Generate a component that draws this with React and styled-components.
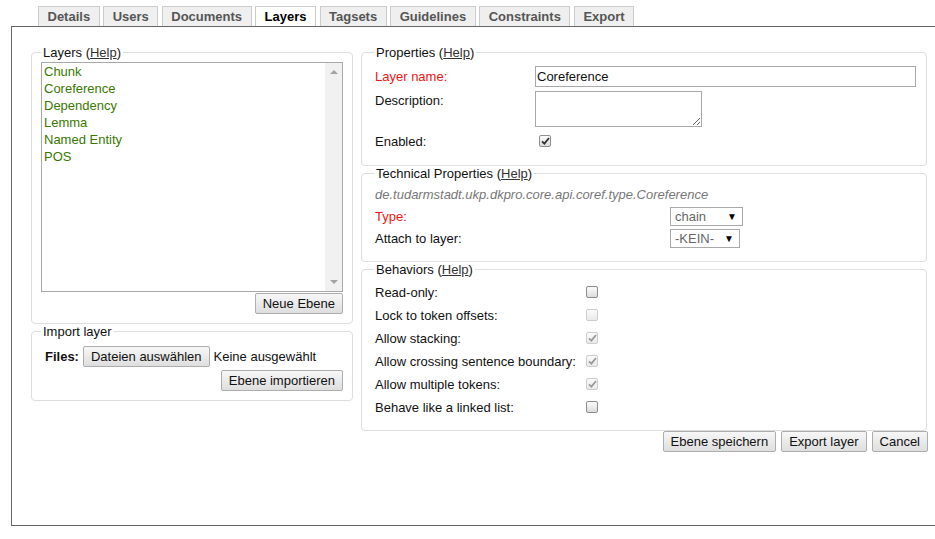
import React from "react";
import styled, { createGlobalStyle, css } from "styled-components";

const Global = createGlobalStyle`
  body {
    margin: 0;
    background: #fff;
    font: 13px/15px "Liberation Sans", Arial, sans-serif;
    color: #111;
  }
`;

const Page = styled.div`
  padding: 6px 0 0 11px;
  width: 935px;
  height: 539px;
  box-sizing: border-box;
  overflow: hidden;
`;

const TabBar = styled.div`
  display: flex;
  gap: 3.5px;
  padding-left: 27px;
`;

const Tab = styled.div`
  height: 19px;
  padding: 0 8.5px;
  display: flex;
  align-items: center;
  border: 1px solid #ccc;
  border-bottom: none;
  background: #efefef;
  font-weight: bold;
  color: #555;
  ${(p) =>
    p.$active &&
    css`
      background: #fff;
      color: #000;
    `}
`;

const Main = styled.div`
  box-sizing: border-box;
  width: 960px;
  height: 500px;
  border: 1px solid #666;
  padding: 18px 0 0 19px;
  display: flex;
  gap: 8px;
  align-items: flex-start;
`;

const Column = styled.div`
  width: ${(p) => p.$width}px;
  display: flex;
  flex-direction: column;
  gap: ${(p) => p.$gap || 0}px;
`;

const Fieldset = styled.fieldset`
  margin: 0;
  border: 1px solid #ddd;
  border-radius: 4px;
  padding: ${(p) => p.$pad || "2px 9px 9px"};
  min-width: 0;
`;

const Legend = styled.legend`
  padding: 0 2px;
  line-height: 15px;
  color: #111;
`;

const HelpLink = styled.a`
  color: #333;
  text-decoration: underline;
  cursor: pointer;
`;

const ListBox = styled.div`
  height: 230px;
  box-sizing: border-box;
  border: 1px solid #a9a9a9;
  display: flex;
`;

const ListItems = styled.div`
  flex: 1;
  padding: 0 2px;
`;

const ListItem = styled.div`
  line-height: 17px;
  color: #3b7800;
`;

const ScrollTrack = styled.div`
  width: 17px;
  background: #f1f1f1;
  display: flex;
  flex-direction: column;
  justify-content: space-between;
  align-items: center;
  padding: 7px 0;
  box-sizing: border-box;
`;

const Arrow = styled.div`
  width: 0;
  height: 0;
  border-left: 4px solid transparent;
  border-right: 4px solid transparent;
  ${(p) =>
    p.$down
      ? css`border-top: 4px solid #a3a3a3;`
      : css`border-bottom: 4px solid #a3a3a3;`}
`;

const RightAlign = styled.div`
  display: flex;
  justify-content: flex-end;
  gap: ${(p) => p.$gap || 0}px;
  margin-top: ${(p) => p.$top || 0}px;
  margin-right: ${(p) => p.$right || 0}px;
`;

const Button = styled.button`
  font: 13px/15px "Liberation Sans", Arial, sans-serif;
  color: #111;
  height: 21px;
  padding: 0 7px;
  border: 1px solid #adadad;
  border-radius: 2px;
  background: linear-gradient(#f7f7f7, #dedede);
`;

const FilesRow = styled.div`
  display: flex;
  align-items: center;
  gap: 4px;
  margin-top: 1px;
`;

const Bold = styled.span`
  font-weight: bold;
  margin-left: 4px;
`;

const FormGrid = styled.div`
  display: grid;
  grid-template-columns: ${(p) => p.$label}px 1fr;
  grid-auto-rows: ${(p) => p.$rows || "auto"};
  row-gap: ${(p) => p.$gap}px;
  align-items: center;
`;

const Label = styled.div`
  color: ${(p) => (p.$required ? "#f01414" : "#111")};
  align-self: ${(p) => (p.$top ? "start" : "center")};
  padding-top: ${(p) => (p.$top ? 2 : 0)}px;
  padding-left: 1px;
  min-height: ${(p) => p.$height || 0}px;
  display: flex;
  align-items: center;
`;

const TextInput = styled.input`
  font: 13px "Liberation Sans", Arial, sans-serif;
  color: #111;
  box-sizing: border-box;
  width: 381px;
  height: 21px;
  border: 1px solid #a9a9a9;
  padding: 0 1px;
  outline: none;
`;

const TextArea = styled.textarea`
  box-sizing: border-box;
  width: 167px;
  height: 36px;
  border: 1px solid #a9a9a9;
  margin: 0;
  outline: none;
`;

const Mono = styled.div`
  grid-column: 1 / 3;
  font-style: italic;
  color: #777;
  padding-left: 1px;
`;

const Select = styled.div`
  width: ${(p) => p.$width}px;
  height: 19px;
  box-sizing: border-box;
  border: 1px solid #a9a9a9;
  display: flex;
  align-items: center;
  justify-content: space-between;
  padding: 0 5px 0 4px;
  color: #666;
`;

const SelectArrow = styled.span`
  color: #000;
  font-size: 10px;
`;

const Box = styled.span`
  width: 12px;
  height: 12px;
  box-sizing: border-box;
  border: 1px solid ${(p) => (p.$disabled ? "#cdcdcd" : "#8e8e8e")};
  border-radius: 2px;
  background: ${(p) =>
    p.$disabled ? "linear-gradient(#fafafa, #eaeaea)" : "linear-gradient(#fcfcfc, #dcdcdc)"};
  display: flex;
  align-items: center;
  justify-content: center;
  margin-left: ${(p) => p.$offset || 0}px;
`;

const Checkbox = ({ checked, disabled, offset }) => (
  <Box $disabled={disabled} $offset={offset}>
    {checked && (
      <svg width="9" height="8" viewBox="0 0 9 8">
        <path
          d="M1 4.3 L3.4 6.6 L8 1"
          fill="none"
          stroke={disabled ? "#9a9a9a" : "#333"}
          strokeWidth="1.8"
        />
      </svg>
    )}
  </Box>
);

const tabs = ["Details", "Users", "Documents", "Layers", "Tagsets", "Guidelines", "Constraints", "Export"];
const layers = ["Chunk", "Coreference", "Dependency", "Lemma", "Named Entity", "POS"];
const behaviors = [
  ["Read-only:", false, false],
  ["Lock to token offsets:", false, true],
  ["Allow stacking:", true, true],
  ["Allow crossing sentence boundary:", true, true],
  ["Allow multiple tokens:", true, true],
  ["Behave like a linked list:", false, false],
];

const Title = ({ children }) => (
  <Legend>
    {children} (<HelpLink>Help</HelpLink>)
  </Legend>
);

export default function App() {
  return (
    <Page>
      <Global />
      <TabBar>
        {tabs.map((t) => (
          <Tab key={t} $active={t === "Layers"}>
            {t}
          </Tab>
        ))}
      </TabBar>
      <Main>
        <Column $width={322}>
          <Fieldset>
            <Title>Layers</Title>
            <ListBox>
              <ListItems>
                {layers.map((l) => (
                  <ListItem key={l}>{l}</ListItem>
                ))}
              </ListItems>
              <ScrollTrack>
                <Arrow />
                <Arrow $down />
              </ScrollTrack>
            </ListBox>
            <RightAlign $top={1}>
              <Button>Neue Ebene</Button>
            </RightAlign>
          </Fieldset>
          <Fieldset $pad="6px 9px 9px">
            <Legend>Import layer</Legend>
            <FilesRow>
              <Bold>Files:</Bold>
              <Button>Dateien auswählen</Button>
              <span>Keine ausgewählt</span>
            </FilesRow>
            <RightAlign $top={3}>
              <Button>Ebene importieren</Button>
            </RightAlign>
          </Fieldset>
        </Column>
        <Column $width={566}>
          <Fieldset $pad="6px 12px 14px">
            <Title>Properties</Title>
            <FormGrid $label={161} $gap={4}>
              <Label $required>Layer name:</Label>
              <TextInput readOnly value="Coreference" />
              <Label $top>Description:</Label>
              <TextArea readOnly />
              <Label $height={20}>Enabled:</Label>
              <Checkbox checked offset={4} />
            </FormGrid>
          </Fieldset>
          <Fieldset $pad="4px 12px 13px">
            <Title>Technical Properties</Title>
            <FormGrid $label={296} $gap={3} $rows="19px">
              <Mono>de.tudarmstadt.ukp.dkpro.core.api.coref.type.Coreference</Mono>
              <Label $required>Type:</Label>
              <Select $width={73}>
                chain<SelectArrow>▼</SelectArrow>
              </Select>
              <Label>Attach to layer:</Label>
              <Select $width={70}>
                -KEIN-<SelectArrow>▼</SelectArrow>
              </Select>
            </FormGrid>
          </Fieldset>
          <Fieldset $pad="5px 12px 13px">
            <Title>Behaviors</Title>
            <FormGrid $label={212} $gap={3} $rows="20px">
              {behaviors.map(([label, checked, disabled]) => (
                <React.Fragment key={label}>
                  <Label>{label}</Label>
                  <Checkbox checked={checked} disabled={disabled} />
                </React.Fragment>
              ))}
            </FormGrid>
          </Fieldset>
          <RightAlign $gap={5} $right={-1}>
            <Button>Ebene speichern</Button>
            <Button>Export layer</Button>
            <Button>Cancel</Button>
          </RightAlign>
        </Column>
      </Main>
    </Page>
  );
}
